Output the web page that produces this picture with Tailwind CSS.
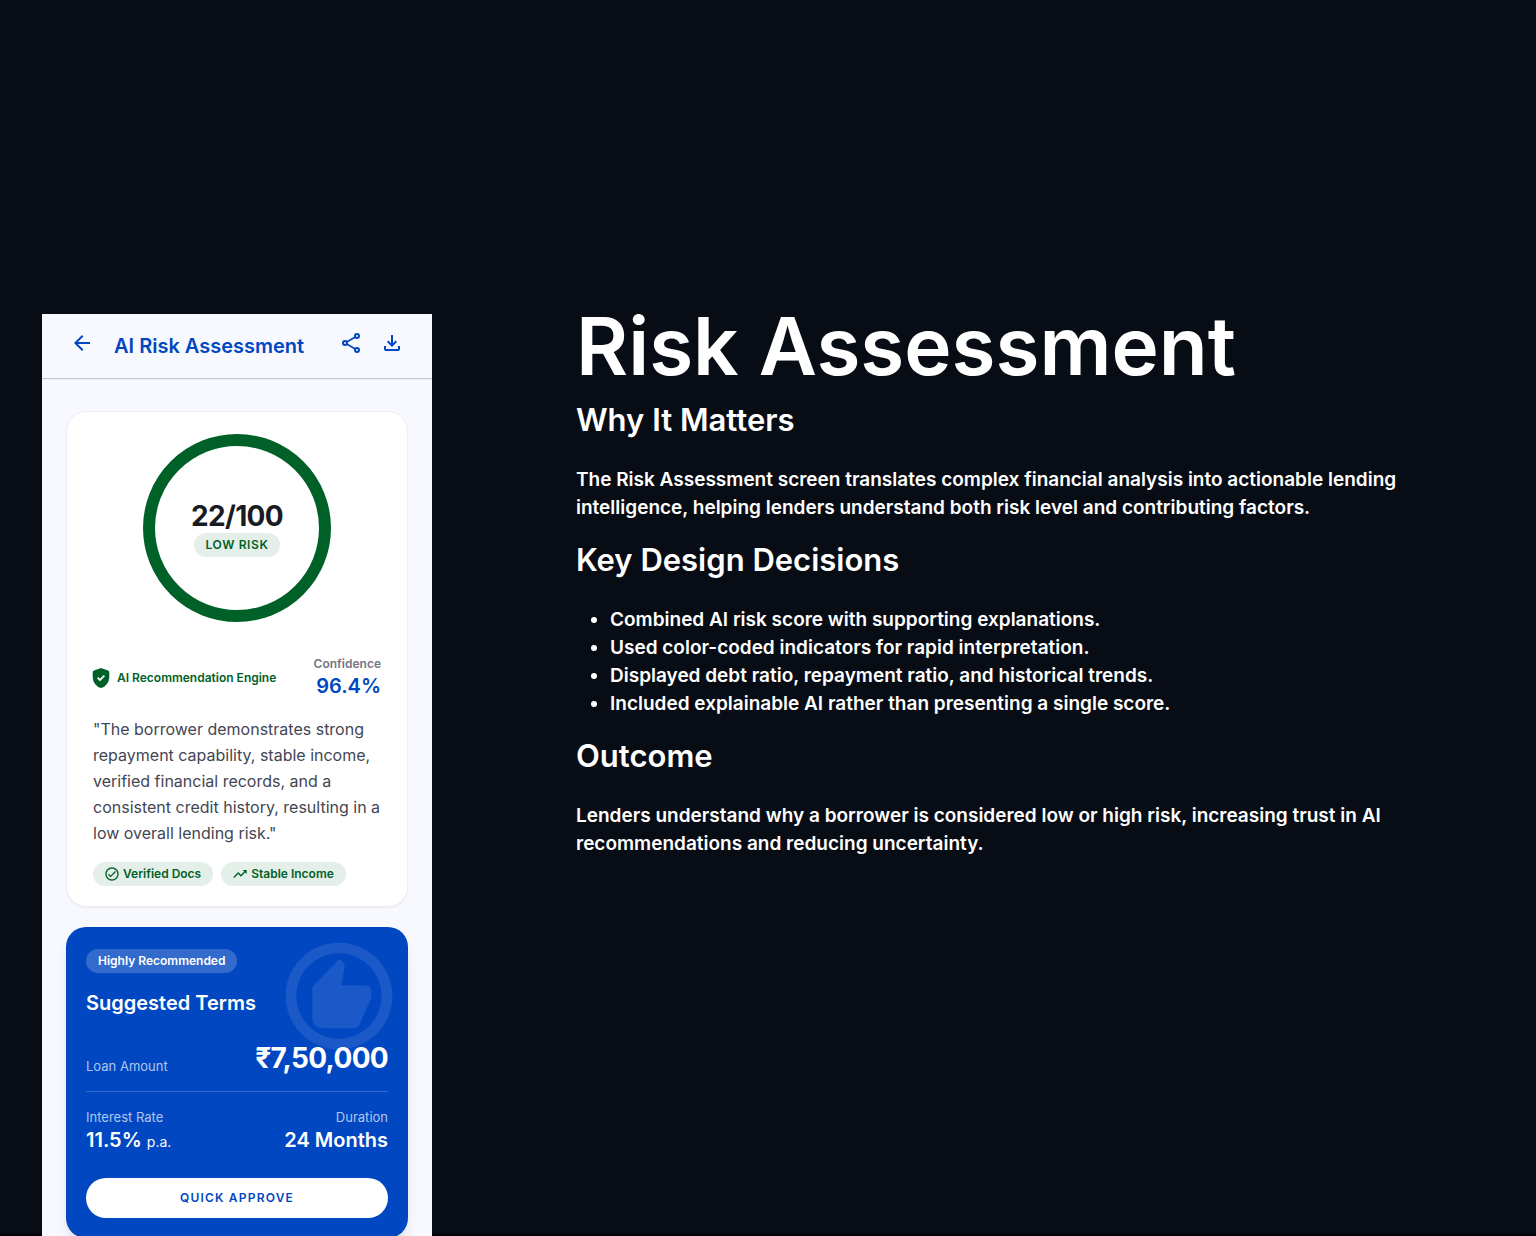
<!DOCTYPE html>
<html lang="en">
<head>
  <meta charset="UTF-8" />
  <meta name="viewport" content="width=device-width, initial-scale=1.0"/>
  <title>Risk Assessment</title>
  <script src="https://cdn.jsdelivr.net/npm/@tailwindcss/browser@4"></script>
</head>
<body class="bg-[#080d15] font-['Inter',sans-serif]">

  <div class="flex h-screen items-start gap-36 overflow-hidden bg-linear-to-t from-[#02040e] from-[3px] to-[#080d15] to-[3px] pt-[314px] pr-30 pl-[42px]">

    <!-- App screen -->
    <div class="w-[390px] shrink-0 bg-[#f8f9ff] pb-8 text-[#191b23]">
      <header class="flex h-[65px] items-start border-b border-[#c3c6d7] px-6 pt-[17px] text-[#0047c1] shadow-xs">
        <button type="button" aria-label="Back" class="flex h-6 w-8 justify-center">
          <svg class="size-6" viewBox="0 0 24 24" fill="currentColor"><path d="M20 11H7.83l5.59-5.59L12 4l-8 8 8 8 1.41-1.41L7.83 13H20v-2z"/></svg>
        </button>
        <h2 class="ml-4 text-xl leading-[30px] font-semibold">AI Risk Assessment</h2>
        <div class="ml-auto flex gap-[9px]">
          <button type="button" aria-label="Share" class="flex h-6 w-8 justify-center">
            <svg class="size-6" viewBox="0 0 24 24" fill="none" stroke="currentColor" stroke-width="2"><circle cx="18" cy="5" r="2"/><circle cx="6" cy="12" r="2"/><circle cx="18" cy="19" r="2"/><path stroke-width="1.6" d="M7.7 11l8.6-5M7.7 13l8.6 5"/></svg>
          </button>
          <button type="button" aria-label="Download" class="flex h-6 w-8 justify-center">
            <svg class="size-6" viewBox="0 0 24 24" fill="currentColor"><path d="M12 16l-5-5 1.4-1.45 2.6 2.6V4h2v8.15l2.6-2.6L17 11l-5 5zM6 20c-.55 0-1.02-.2-1.41-.59C4.2 19.02 4 18.55 4 18v-3h2v3h12v-3h2v3c0 .55-.2 1.02-.59 1.41-.39.39-.86.59-1.41.59H6z"/></svg>
          </button>
        </div>
      </header>

      <div class="flex flex-col gap-5 px-6 pt-8">
        <!-- Score card -->
        <section class="rounded-[20px] border border-[#ededf6] bg-white px-[26px] py-5 shadow-xs">
          <div class="relative mx-auto size-48">
            <svg class="size-48" viewBox="0 0 192 192" fill="none"><circle cx="96" cy="96" r="88" stroke="#006128" stroke-width="12"/></svg>
            <div class="absolute inset-0 flex flex-col items-center justify-center">
              <span class="text-[28px] leading-[34px] font-bold tracking-tight">22/100</span>
              <span class="rounded-full bg-[#006128]/10 px-3 text-xs leading-6 font-semibold tracking-wider text-[#006128]">LOW RISK</span>
            </div>
          </div>

          <div class="mt-8 flex items-center justify-between">
            <div class="flex items-center gap-1 text-[#006128]">
              <svg class="-ml-1 size-6" viewBox="0 0 24 24" fill="currentColor" fill-rule="evenodd"><path d="M12 2l7 2.6q1.3.5 1.3 1.9v4.6q0 3.8-2.3 6.9T12 22q-3.7-.9-6-4T3.7 11.1V6.5q0-1.4 1.3-1.9zM11 15.3l5-5L14.7 9 11 12.7 9.3 11 8 12.3z"/></svg>
              <span class="text-xs font-semibold">AI Recommendation Engine</span>
            </div>
            <div class="text-right">
              <p class="text-xs leading-4 font-semibold text-[#737685]">Confidence</p>
              <p class="text-xl leading-7 font-semibold text-[#0047c1]">96.4%</p>
            </div>
          </div>

          <p class="mt-4 text-base leading-[26px] text-[#434654]">"The borrower demonstrates strong repayment capability, stable income, verified financial records, and a consistent credit history, resulting in a low overall lending risk."</p>

          <div class="mt-4 flex gap-2 text-xs leading-6 font-semibold text-[#006128]">
            <span class="flex items-center gap-[3px] rounded-full bg-[#006128]/10 pr-3 pl-[11px]">
              <svg class="size-4" viewBox="0 0 24 24" fill="currentColor"><path d="M12 2C6.48 2 2 6.48 2 12s4.48 10 10 10 10-4.48 10-10S17.52 2 12 2zm0 18c-4.41 0-8-3.59-8-8s3.59-8 8-8 8 3.59 8 8-3.59 8-8 8zm4.59-12.42L10 14.17l-2.59-2.58L6 13l4 4 8-8z"/></svg>
              Verified Docs
            </span>
            <span class="flex items-center gap-[3px] rounded-full bg-[#006128]/10 pr-3 pl-[11px]">
              <svg class="size-4" viewBox="0 0 24 24" fill="currentColor"><path d="M16 6l2.29 2.29-4.88 4.88-4-4L2 16.59 3.41 18l6-6 4 4 6.3-6.29L22 12V6z"/></svg>
              Stable Income
            </span>
          </div>
        </section>

        <!-- Suggested terms -->
        <section class="relative rounded-[20px] bg-[#0047c1] px-5 pt-[22px] pb-5 text-white shadow-lg">
          <svg class="absolute top-[5px] right-[5px] size-32 text-white/10" viewBox="0 0 24 24" fill="currentColor"><path d="M12 2C6.48 2 2 6.48 2 12s4.48 10 10 10 10-4.48 10-10S17.52 2 12 2zm0 18c-4.41 0-8-3.59-8-8s3.59-8 8-8 8 3.59 8 8-3.59 8-8 8z"/><path d="M7 10.8c0-.3.12-.58.33-.8L12.05 5.05l.75.7c.22.22.3.4.26.7L12.4 10.05H17c.6 0 1.07.4 1.07 1v.9c0 .15-.03.3-.08.45l-2.1 4.9c-.2.5-.6.76-1.1.76H9c-1.1 0-2-.9-2-2z"/></svg>
          <span class="flex w-fit rounded-full bg-white/20 px-3 text-xs leading-6 font-semibold">Highly Recommended</span>
          <h3 class="mt-4 text-xl leading-7 font-semibold">Suggested Terms</h3>
          <div class="mt-6 flex items-end justify-between border-b border-white/20 pb-4">
            <span class="text-[13px] leading-[18px] text-white/70">Loan Amount</span>
            <span class="relative text-[28px] leading-[34px] font-bold tracking-tight">₹7,50,000</span>
          </div>
          <div class="mt-4 flex justify-between">
            <div>
              <p class="text-[13px] leading-[18px] text-white/70">Interest Rate</p>
              <p class="text-xl leading-7 font-semibold">11.5% <span class="text-sm font-normal">p.a.</span></p>
            </div>
            <div class="text-right">
              <p class="text-[13px] leading-[18px] text-white/70">Duration</p>
              <p class="text-xl leading-7 font-semibold">24 Months</p>
            </div>
          </div>
          <button type="button" class="mt-6 h-10 w-full rounded-full bg-white text-xs font-semibold tracking-widest text-[#0047c1]">QUICK APPROVE</button>
        </section>
      </div>
    </div>

    <!-- Case study notes -->
    <main class="min-w-0 flex-1 text-[19px] leading-7 font-semibold text-white">
      <h1 class="text-[80px] leading-16">Risk Assessment</h1>

      <h2 class="mt-5 mb-6 text-[31px] leading-11">Why It Matters</h2>
      <p>The Risk Assessment screen translates complex financial analysis into actionable lending intelligence, helping lenders understand both risk level and contributing factors.</p>

      <h2 class="mt-4 mb-6 text-[31px] leading-11">Key Design Decisions</h2>
      <ul class="list-disc pl-[34px]">
        <li>Combined AI risk score with supporting explanations.</li>
        <li>Used color-coded indicators for rapid interpretation.</li>
        <li>Displayed debt ratio, repayment ratio, and historical trends.</li>
        <li>Included explainable AI rather than presenting a single score.</li>
      </ul>

      <h2 class="mt-4 mb-6 text-[31px] leading-11">Outcome</h2>
      <p>Lenders understand why a borrower is considered low or high risk, increasing trust in AI recommendations and reducing uncertainty.</p>
    </main>

  </div>

</body>
</html>
